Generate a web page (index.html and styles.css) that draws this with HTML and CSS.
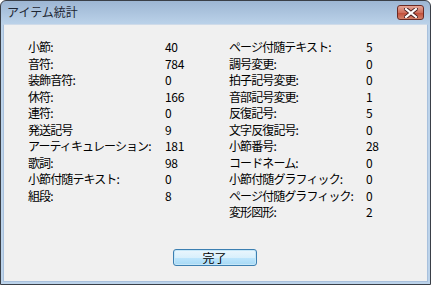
FILE: index.html
```html
<!DOCTYPE html>
<html lang="ja">
<head>
  <meta charset="UTF-8">
  <title>アイテム統計</title>
  <link rel="stylesheet" href="styles.css">
</head>
<body>
  <div class="window">
    <div class="titlebar">
      <span class="title">アイテム統計</span>
      <div class="close">
        <svg width="14" height="10" viewBox="0 0 14 10">
          <path d="M2 1 L12 9 M12 1 L2 9" stroke="#4a2020" stroke-width="4" stroke-linecap="square"/>
          <path d="M2 1 L12 9 M12 1 L2 9" stroke="#fff" stroke-width="2.2" stroke-linecap="square"/>
        </svg>
      </div>
    </div>
    <div class="content">
      <div class="stats">
        <div class="col">
          <div class="row"><span class="label">小節:</span><span class="val">40</span></div>
          <div class="row"><span class="label">音符:</span><span class="val">784</span></div>
          <div class="row"><span class="label">装飾音符:</span><span class="val">0</span></div>
          <div class="row"><span class="label">休符:</span><span class="val">166</span></div>
          <div class="row"><span class="label">連符:</span><span class="val">0</span></div>
          <div class="row"><span class="label">発送記号</span><span class="val">9</span></div>
          <div class="row"><span class="label">アーティキュレーション:</span><span class="val">181</span></div>
          <div class="row"><span class="label">歌詞:</span><span class="val">98</span></div>
          <div class="row"><span class="label">小節付随テキスト:</span><span class="val">0</span></div>
          <div class="row"><span class="label">組段:</span><span class="val">8</span></div>
        </div>
        <div class="col">
          <div class="row"><span class="label">ページ付随テキスト:</span><span class="val">5</span></div>
          <div class="row"><span class="label">調号変更:</span><span class="val">0</span></div>
          <div class="row"><span class="label">拍子記号変更:</span><span class="val">0</span></div>
          <div class="row"><span class="label">音部記号変更:</span><span class="val">1</span></div>
          <div class="row"><span class="label">反復記号:</span><span class="val">5</span></div>
          <div class="row"><span class="label">文字反復記号:</span><span class="val">0</span></div>
          <div class="row"><span class="label">小節番号:</span><span class="val">28</span></div>
          <div class="row"><span class="label">コードネーム:</span><span class="val">0</span></div>
          <div class="row"><span class="label">小節付随グラフィック:</span><span class="val">0</span></div>
          <div class="row"><span class="label">ページ付随グラフィック:</span><span class="val">0</span></div>
          <div class="row"><span class="label">変形図形:</span><span class="val">2</span></div>
        </div>
      </div>
      <div class="actions">
        <button class="ok">完了</button>
      </div>
    </div>
  </div>
</body>
</html>
```

FILE: styles.css
```css
body {
  margin: 0;
  background: #ffffff;
  font-family: "Noto Sans CJK JP", "Liberation Sans", sans-serif;
  font-size: 12px;
  color: #000;
}

.window {
  width: 429px;
  height: 283px;
  border: 1px solid #3a3f47;
  border-radius: 6px 6px 0 0;
  background: linear-gradient(#9db6d3, #bcd3ea 24px);
  display: flex;
  flex-direction: column;
  overflow: hidden;
}

.titlebar {
  height: 23px;
  display: flex;
  align-items: center;
  padding: 0 6px;
  position: relative;
}

.title {
  font-size: 12px;
  color: #1e2633;
  margin-top: -2px;
}

.close {
  position: absolute;
  right: 6px;
  top: 4px;
  width: 27px;
  height: 15px;
  border: 1px solid #6b2a24;
  border-radius: 3px;
  background: linear-gradient(#e5a697, #cf6f5d 50%, #c04a36 51%, #d3826b);
  display: flex;
  align-items: center;
  justify-content: center;
  box-sizing: border-box;
}

.content {
  flex: 1;
  margin: 0 2px 2px 2px;
  background: #f0f0f0;
  border: 1px solid #a8c0dc;
  border-top: 1px solid #cfdbe9;
  display: flex;
  flex-direction: column;
}

.stats {
  display: flex;
  padding: 14px 0 0 24px;
}

.col {
  display: flex;
  flex-direction: column;
}

.col:first-child {
  width: 201px;
}

.row {
  display: flex;
  height: 16.5px;
  line-height: 16.5px;
}

.label {
  width: 137px;
  letter-spacing: -0.9px;
}

.val {
  letter-spacing: -0.3px;
}

.actions {
  margin-top: auto;
  display: flex;
  justify-content: center;
  padding-bottom: 15px;
}

.ok {
  width: 84px;
  height: 17px;
  padding: 0;
  font-family: inherit;
  font-size: 12px;
  line-height: 14px;
  border: 1px solid #3c7fb1;
  border-radius: 3px;
  background: linear-gradient(#eaf6fd, #d9f0fc 50%, #bee6fd 51%, #a7d9f5);
  box-shadow: inset 0 0 0 1px #c6e7f8;
  color: #000;
  margin-left: -2px;
}
```
